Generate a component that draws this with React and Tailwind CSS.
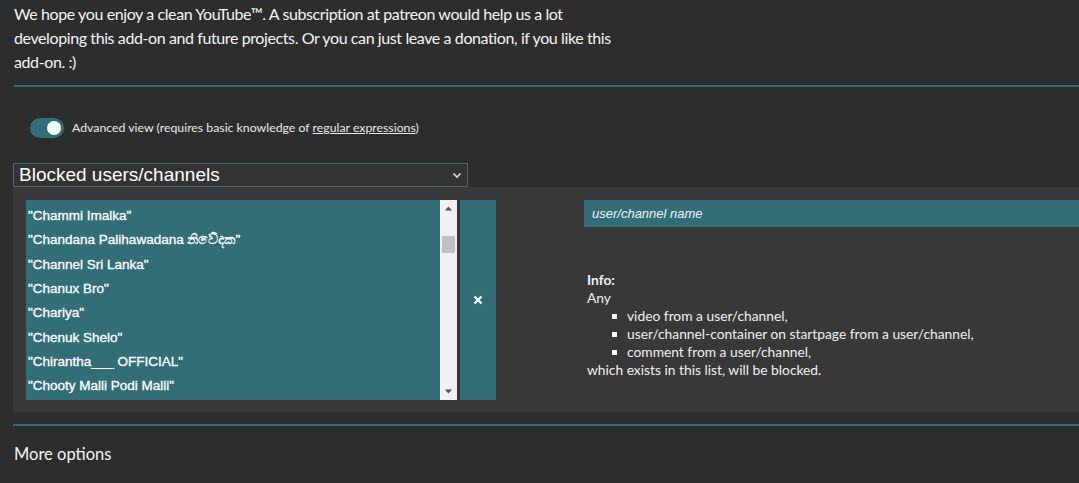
import React from 'react';

const channels = [
  '"Chammi Imalka"',
  '"Chandana Palihawadana නිවේදක"',
  '"Channel Sri Lanka"',
  '"Chanux Bro"',
  '"Chariya"',
  '"Chenuk Shelo"',
  '"Chirantha___ OFFICIAL"',
  '"Chooty Malli Podi Malli"',
];

function Toggle() {
  return (
    <div className="w-[34px] h-[20px] rounded-full bg-[#336e78] flex items-center justify-end px-[3px]">
      <div className="w-[14px] h-[14px] rounded-full bg-white" />
    </div>
  );
}

function Scrollbar() {
  return (
    <div className="w-[17px] bg-[#f1f1f1] flex flex-col items-center">
      <svg width="17" height="17" viewBox="0 0 17 17">
        <path d="M5 10.5h7L8.5 6.5z" fill="#505050" />
      </svg>
      <div className="w-[13px] h-[17px] bg-[#c1c1c1] mt-[19px]" />
      <div className="flex-1" />
      <svg width="17" height="17" viewBox="0 0 17 17">
        <path d="M5 6.5h7L8.5 10.5z" fill="#505050" />
      </svg>
    </div>
  );
}

export default function App() {
  const ui = { fontFamily: 'Lato, "Open Sans", sans-serif' };
  const arial = { fontFamily: '"Liberation Sans", Arial, sans-serif' };

  return (
    <div className="min-h-screen bg-[#2d2d2d] text-white overflow-hidden" style={ui}>

      {/* Intro */}
      <p className="px-[14px] pt-[2px] text-[16px] leading-[24px] tracking-[-0.4px] text-[#f4f4f4]">
        We hope you enjoy a clean YouTube™. A subscription at patreon would help us a lot<br />
        developing this add-on and future projects. Or you can just leave a donation, if you like this<br />
        add-on. :)
      </p>

      <div className="ml-[14px] mt-[11px] h-[2px] bg-[#336e78]" />

      {/* Advanced toggle */}
      <div className="flex items-center gap-[8px] pl-[30px] mt-[31px] text-[12.3px] text-[#eaeaea]">
        <Toggle />
        <span>
          Advanced view (requires basic knowledge of <span className="underline">regular expressions</span>)
        </span>
      </div>

      {/* List chooser */}
      <div
        className="ml-[13px] mt-[25px] w-[455px] h-[24px] border border-[#3f6d75] bg-[#333333] flex items-center justify-between pl-[5px] pr-[4px]"
        style={arial}
      >
        <span className="text-[19px] text-white">Blocked users/channels</span>
        <svg width="12" height="12" viewBox="0 0 12 12">
          <path d="M2.5 4.5 6 8l3.5-3.5" fill="none" stroke="#e0e0e0" strokeWidth="1.6" />
        </svg>
      </div>

      {/* Editor panel */}
      <div className="ml-[13px] bg-[#383838] h-[225px] flex pl-[13px] pt-[13px]">
        <div className="flex h-[200px] w-[431px] bg-[#336e78]" style={arial}>
          <ul className="flex-1 pt-[4px] pl-[2px] overflow-hidden">
            {channels.map((c) => (
              <li
                key={c}
                className="h-[24.3px] flex items-center text-[13.5px] text-white [-webkit-text-stroke:0.3px_#ffffff]"
              >
                {c}
              </li>
            ))}
          </ul>
          <Scrollbar />
        </div>

        <button className="ml-[3px] w-[36px] h-[200px] bg-[#336e78] flex items-center justify-center text-white">
          <svg width="10" height="10" viewBox="0 0 10 10">
            <path d="M1.5 1.5l7 7M8.5 1.5l-7 7" stroke="#fff" strokeWidth="2.2" />
          </svg>
        </button>

        <div className="ml-[88px] flex-1">
          <div
            className="h-[27px] bg-[#336e78] flex items-center pl-[8px] text-[13px] italic text-[#eef4f5]"
            style={arial}
          >
            user/channel name
          </div>

          <div className="mt-[44px] pl-[3px] text-[13.8px] leading-[18px] text-[#f0f0f0]">
            <div className="font-bold">Info:</div>
            <div>Any</div>
            <ul className="pl-[25px]">
              {[
                'video from a user/channel,',
                'user/channel-container on startpage from a user/channel,',
                'comment from a user/channel,',
              ].map((t) => (
                <li key={t} className="flex items-center gap-[10px]">
                  <span className="w-[5px] h-[5px] bg-white" />
                  {t}
                </li>
              ))}
            </ul>
            <div>which exists in this list, will be blocked.</div>
          </div>
        </div>
      </div>

      <div className="ml-[13px] mt-[12px] h-[2px] bg-[#336e78]" />

      <div className="px-[14px] pt-[16px] text-[16.5px] text-[#f4f4f4]">More options</div>
    </div>
  );
}
